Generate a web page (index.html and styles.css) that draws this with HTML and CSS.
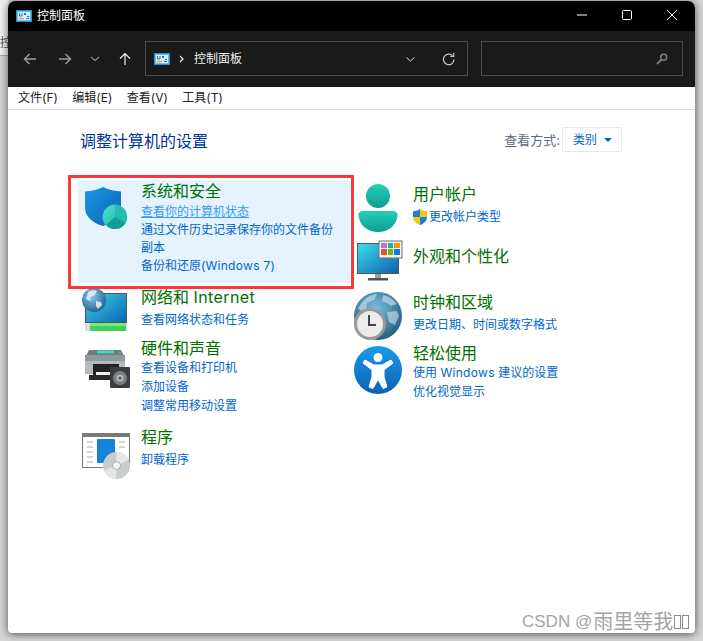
FILE: index.html
```html
<!DOCTYPE html>
<html lang="zh-CN">
<head>
<meta charset="utf-8">
<title>控制面板</title>
<link rel="stylesheet" href="styles.css">
</head>
<body>
<div class="behind"><span class="behind-text">控</span></div>
<div class="window">
  <header class="titlebar">
    <svg class="app-icon" viewBox="0 0 16 12"><rect x=".5" y=".5" width="15" height="11" fill="#5cc3ee" stroke="#2a8fd4"/><rect x="2" y="2" width="12" height="8" fill="#d8f1fb"/><path d="M3.500 3v3h2.500V3" fill="none" stroke="#2a6fb8"/><path d="M8 3h2v2H8z" fill="#2a6fb8"/><path d="M3 8.500h5" stroke="#f09a2a" stroke-width="1.500"/><path d="M10 8.500h3M11 6.500h2" stroke="#2a6fb8"/></svg>
    <span class="title-text">控制面板</span>
    <div class="caption">
      <svg class="cap" viewBox="0 0 10 20"><path d="M0 10h10" stroke="#fff" fill="none"/></svg>
      <svg class="cap" viewBox="0 0 10 20"><rect x=".5" y="5.500" width="9" height="9" rx="1" stroke="#fff" fill="none"/></svg>
      <svg class="cap" viewBox="0 0 10 20"><path d="M0 5l10 10M10 5L0 15" stroke="#fff" fill="none"/></svg>
    </div>
  </header>
  <div class="toolbar">
    <svg class="nav nav-back" viewBox="0 0 14 14"><path d="M13 7H1.500M6.500 2l-5 5 5 5" stroke="#9a9a9a" stroke-width="1.500" fill="none"/></svg>
    <svg class="nav nav-fwd" viewBox="0 0 14 14"><path d="M1 7h11.500M7.500 2l5 5-5 5" stroke="#9a9a9a" stroke-width="1.500" fill="none"/></svg>
    <svg class="nav nav-down" viewBox="0 0 10 6"><path d="M1 1l4 3.500L9 1" stroke="#8a8a8a" stroke-width="1.300" fill="none"/></svg>
    <svg class="nav nav-up" viewBox="0 0 14 14"><path d="M7 13V1.500M2 6.500l5-5 5 5" stroke="#f2f2f2" stroke-width="1.200" fill="none"/></svg>
    <div class="address">
      <svg class="app-icon" viewBox="0 0 16 12"><rect x=".5" y=".5" width="15" height="11" fill="#5cc3ee" stroke="#2a8fd4"/><rect x="2" y="2" width="12" height="8" fill="#d8f1fb"/><path d="M3.500 3v3h2.500V3" fill="none" stroke="#2a6fb8"/><path d="M8 3h2v2H8z" fill="#2a6fb8"/><path d="M3 8.500h5" stroke="#f09a2a" stroke-width="1.500"/><path d="M10 8.500h3M11 6.500h2" stroke="#2a6fb8"/></svg>
      <svg class="crumb-sep" viewBox="0 0 5 8"><path d="M1 1l3 3-3 3" stroke="#eee" stroke-width="1.200" fill="none"/></svg>
      <span class="crumb">控制面板</span>
      <svg class="addr-down" viewBox="0 0 9 5"><path d="M.5.500l4 3.500 4-3.500" stroke="#ddd" fill="none"/></svg>
      <svg class="refresh" viewBox="0 0 13 13"><path d="M10.500 2.700A5.300 5.300 0 1 0 12 6.500" stroke="#c8c8c8" stroke-width="1.200" fill="none"/><path d="M8.300 3.300h3.400V0" stroke="#c8c8c8" stroke-width="1.200" fill="none"/></svg>
    </div>
    <div class="search">
      <svg class="search-icon" viewBox="0 0 12 12"><circle cx="7.700" cy="4.300" r="3" stroke="#7d7d7d" stroke-width="1.500" fill="none"/><path d="M5.500 6.500L1 11" stroke="#7d7d7d" stroke-width="2"/></svg>
    </div>
  </div>
  <nav class="menubar">
    <span class="menu-item">文件(F)</span>
    <span class="menu-item">编辑(E)</span>
    <span class="menu-item">查看(V)</span>
    <span class="menu-item">工具(T)</span>
  </nav>
  <main class="content">
    <div class="content-head">
      <h1 class="heading">调整计算机的设置</h1>
      <div class="viewby">
        <span class="viewby-label">查看方式:</span>
        <div class="viewby-btn">类别<span class="caret"></span></div>
      </div>
    </div>
    <div class="columns">
      <div class="col col-left">
        <section class="item item-hover">
          <svg class="icon" viewBox="0 0 63 50">
            <defs>
              <linearGradient id="sh" x1="0" y1="0" x2="1" y2="1"><stop offset="0" stop-color="#1a98e6"/><stop offset="1" stop-color="#0a62b0"/></linearGradient>
              <linearGradient id="tl" x1="0" y1="0" x2="1" y2="1"><stop offset="0" stop-color="#46e8d8"/><stop offset="1" stop-color="#14a898"/></linearGradient>
            </defs>
            <path d="M7 11.500C13 11 19 10 25 7c6 3 12 4 18 4.500V28c0 9-8 15-18 18C15 43 7 37 7 28z" fill="url(#sh)"/>
            <circle cx="37" cy="37" r="12.500" fill="#fff" fill-opacity=".35"/>
            <circle cx="37" cy="37" r="12" fill="url(#tl)"/>
            <path d="M37 25a12 12 0 0 1 10.500 18L37 37z" fill="#22bfae"/>
            <path d="M47.500 43A12 12 0 0 1 28 45l9-8z" fill="#159c94"/>
          </svg>
          <div class="item-body">
            <h2 class="item-title">系统和安全</h2>
            <a class="link link-active">查看你的计算机状态</a>
            <a class="link">通过文件历史记录保存你的文件备份副本</a>
            <a class="link">备份和还原(<span class="latin">Windows 7</span>)</a>
          </div>
        </section>
        <section class="item item-net">
          <svg class="icon" viewBox="0 0 63 50">
            <defs>
              <linearGradient id="scr" x1="0" y1="0" x2="1" y2="1"><stop offset="0" stop-color="#3fd0e8"/><stop offset="1" stop-color="#0a66b4"/></linearGradient>
              <radialGradient id="glb" cx=".4" cy=".35" r=".7"><stop offset="0" stop-color="#8ac8ee"/><stop offset="1" stop-color="#1c5f92"/></radialGradient>
            </defs>
            <rect x="7.500" y="7.500" width="41" height="29" fill="url(#scr)" stroke="#555"/>
            <rect x="7" y="37" width="42" height="8" rx="1" fill="#ddd"/>
            <rect x="12" y="37" width="36" height="8" rx="1" fill="#3fcf5a"/>
            <rect x="12" y="37" width="36" height="3" fill="#72ea7e"/>
            <circle cx="16" cy="14" r="12" fill="url(#glb)"/>
            <path d="M10 6c3-2 7-2 9-1l-2 4-5 2 1 4-5-2zM18 15l5 1 1 3-4 4-2-3z" fill="#e8f2f8" fill-opacity=".85"/>
          </svg>
          <div class="item-body">
            <h2 class="item-title">网络和 <span class="latin">Internet</span></h2>
            <a class="link">查看网络状态和任务</a>
          </div>
        </section>
        <section class="item item-hw">
          <svg class="icon icon-tall" viewBox="0 0 63 50">
            <path d="M11 2h32l3 6H8z" fill="#6f7a7d"/>
            <rect x="19" y="2.500" width="17" height="3" fill="#45d6c0"/>
            <rect x="7" y="7" width="40" height="19" rx="1" fill="#b3babd"/>
            <rect x="7" y="7" width="40" height="6" fill="#8f989b"/>
            <circle cx="42" cy="5" r="1" fill="#4fe06a"/>
            <rect x="15" y="16" width="26" height="13" fill="#222"/>
            <rect x="18" y="24" width="22" height="6" fill="#f1f1f1"/>
            <rect x="11" y="27" width="30" height="5" fill="#2b2b2b"/>
            <rect x="32" y="19" width="20" height="21" rx="1" fill="#3a3d40"/>
            <circle cx="42" cy="30" r="7" fill="#7b7f83"/>
            <circle cx="42" cy="30" r="3.500" fill="#b4b6b8"/>
            <circle cx="42" cy="30" r="1.500" fill="#55585b"/>
          </svg>
          <div class="item-body">
            <h2 class="item-title">硬件和声音</h2>
            <a class="link">查看设备和打印机</a>
            <a class="link">添加设备</a>
            <a class="link">调整常用移动设置</a>
          </div>
        </section>
        <section class="item item-prog">
          <svg class="icon" viewBox="0 0 63 50">
            <rect x="4.500" y="5.500" width="47" height="34" fill="#fff" stroke="#7a7a7a"/>
            <rect x="4" y="5" width="48" height="4" fill="#7a7a7a"/>
            <path d="M9 14h6M9 19h6M9 24h6M9 29h6M9 34h6M41 14h6M41 19h6" stroke="#aaa"/>
            <rect x="19" y="11" width="18" height="24" rx="1" fill="#1682d8"/>
            <circle cx="38.500" cy="37.500" r="13.500" fill="#c9cccd"/>
            <path d="M38.500 24a13.500 13.500 0 0 1 12 8l-12 5.500z" fill="#e6e8e8"/>
            <path d="M26 42a13.500 13.500 0 0 0 12 9l.5-13.500z" fill="#e3e5e5"/>
            <circle cx="38.500" cy="37.500" r="4" fill="#f4f4f4" stroke="#aaa"/>
          </svg>
          <div class="item-body">
            <h2 class="item-title">程序</h2>
            <a class="link">卸载程序</a>
          </div>
        </section>
      </div>
      <div class="col col-right">
        <section class="item item-user">
          <svg class="icon" viewBox="0 0 60 50">
            <defs>
              <linearGradient id="usr" x1="0" y1="0" x2="0" y2="1"><stop offset="0" stop-color="#24d0b8"/><stop offset="1" stop-color="#0f9c92"/></linearGradient>
            </defs>
            <circle cx="25" cy="13" r="12" fill="url(#usr)"/>
            <path d="M10 28h30c3 0 5 2 4.500 5C43 43 35 49 25 49S7 43 5.500 33C5 30 7 28 10 28z" fill="url(#usr)"/>
          </svg>
          <div class="item-body">
            <h2 class="item-title">用户帐户</h2>
            <a class="link link-uac"><svg class="uac" viewBox="0 0 14 16"><path d="M7 0c2 1.500 4 2 7 2.500V8c0 4-3 6.500-7 8-4-1.500-7-4-7-8V2.500C3 2 5 1.500 7 0z" fill="#f5c518"/><path d="M7 0v8H0V2.500C3 2 5 1.500 7 0z" fill="#1c7fd6"/><path d="M7 8h7c0 4-3 6.500-7 8z" fill="#1c7fd6"/></svg>更改帐户类型</a>
          </div>
        </section>
        <section class="item item-look">
          <svg class="icon icon-look" viewBox="0 0 60 50">
            <defs>
              <linearGradient id="scr2" x1="0" y1="0" x2="1" y2="1"><stop offset="0" stop-color="#3fdcea"/><stop offset="1" stop-color="#0a62ae"/></linearGradient>
            </defs>
            <rect x="4.500" y="2.500" width="41" height="30" fill="url(#scr2)" stroke="#555"/>
            <rect x="22" y="33" width="6" height="5" fill="#9aa0a4"/>
            <rect x="15" y="37" width="20" height="2.500" fill="#4f5458"/>
            <rect x="26" y="0" width="23" height="17" fill="#f4f4f4" stroke="#6f6f6f" stroke-width="1"/>
            <rect x="28" y="2" width="6" height="5" fill="#a77bd8"/><rect x="35" y="2" width="5" height="5" fill="#19b29a"/><rect x="41" y="2" width="6" height="5" fill="#f2950f"/>
            <rect x="28" y="8" width="6" height="6" fill="#e8541a"/><rect x="35" y="8" width="5" height="6" fill="#6cb51f"/><rect x="41" y="8" width="6" height="6" fill="#0f78d8"/>
          </svg>
          <div class="item-body">
            <h2 class="item-title">外观和个性化</h2>
          </div>
        </section>
        <section class="item item-time">
          <svg class="icon" viewBox="0 0 60 50">
            <defs>
              <radialGradient id="gl2" cx=".45" cy=".35" r=".75"><stop offset="0" stop-color="#7cc0e0"/><stop offset="1" stop-color="#174f72"/></radialGradient>
            </defs>
            <circle cx="25" cy="25" r="24" fill="url(#gl2)"/>
            <path d="M10 10c4-4 9-7 14-7l-3 6-7 3-1 7-5 1-3-3zM30 4c6 1 10 4 14 9l-6 2-4-3-5-2zM34 21l10-1 2 5-4 9-6-3z" fill="#cfe5f0" fill-opacity=".6"/>
            <circle cx="17" cy="33" r="14.500" fill="#ececec" stroke="#9a9a9a" stroke-width="3"/>
            <path d="M16 24v10h7" stroke="#444" stroke-width="2" fill="none"/>
          </svg>
          <div class="item-body">
            <h2 class="item-title">时钟和区域</h2>
            <a class="link">更改日期、时间或数字格式</a>
          </div>
        </section>
        <section class="item item-ease">
          <svg class="icon icon-ease" viewBox="0 0 60 50">
            <defs>
              <linearGradient id="eas" x1="0" y1="0" x2="0" y2="1"><stop offset="0" stop-color="#1a9ae8"/><stop offset="1" stop-color="#0a62b4"/></linearGradient>
            </defs>
            <circle cx="25" cy="24" r="24" fill="url(#eas)"/>
            <circle cx="25" cy="11.500" r="4.500" fill="#fff"/>
            <path d="M12 14l9 5h8l9-5 2 3-9 7v7l3 10-4 1.500-5-9-5 9-4-1.500 3-10v-7l-9-7z" fill="#fff" stroke="#fff" stroke-linejoin="round"/>
          </svg>
          <div class="item-body">
            <h2 class="item-title">轻松使用</h2>
            <a class="link">使用 <span class="latin">Windows</span> 建议的设置</a>
            <a class="link">优化视觉显示</a>
          </div>
        </section>
      </div>
    </div>
  </main>
</div>
<div class="annot"></div>
<div class="watermark">CSDN @<span class="wm-cjk">雨里等我</span><span class="tofu"></span><span class="tofu"></span></div>
</body>
</html>
```
FILE: styles.css
```css
* { box-sizing: border-box; }
html, body { margin: 0; height: 100%; }
body {
  width: 703px;
  height: 641px;
  overflow: hidden;
  position: relative;
  padding: 1px 8px 8px;
  background: #d6d6d6;
  font-family: Inter, "Noto Sans CJK SC", sans-serif;
  font-size: 12px;
}
.behind { position: absolute; left: 0; top: 0; width: 8px; height: 56px; border-bottom: 1px solid #aaa; background: #f1f1f1; overflow: hidden; }
.behind-text { position: absolute; left: 0; top: 33px; color: #555; font-size: 12px; }
.window {
  position: relative;
  width: 687px;
  height: 632px;
  background: #fff;
  border-radius: 7px 7px 4px 4px;
  overflow: hidden;
  display: flex;
  flex-direction: column;
  box-shadow: 0 1px 9px rgba(0, 0, 0, .65);
}
.titlebar { height: 30px; flex: none; background: #000; color: #fff; display: flex; align-items: center; padding-left: 8px; }
.app-icon { width: 16px; height: 12px; flex: none; }
.title-text { margin-left: 5px; font-size: 12px; line-height: 30px; }
.caption { margin-left: auto; display: flex; gap: 35px; height: 20px; padding-right: 18px; margin-bottom: 2px; }
.cap { width: 10px; height: 20px; display: block; overflow: visible; }
.toolbar { height: 56px; flex: none; background: #1a1a1a; display: flex; align-items: center; position: relative; padding: 0 0 1px 15px; }
.nav { flex: none; display: block; }
.nav-back, .nav-fwd { width: 14px; height: 14px; }
.nav-fwd { margin-left: 21px; }
.nav-down { width: 10px; height: 6px; margin-left: 18px; }
.nav-up { width: 14px; height: 14px; margin-left: 18px; }
.address {
  margin-left: 13px;
  width: 323px;
  height: 35px;
  border: 1px solid #4c4c4c;
  display: flex;
  align-items: center;
  padding-left: 8px;
}
.crumb-sep { width: 5px; height: 8px; margin-left: 9px; }
.crumb { margin-left: 10px; margin-bottom: 2px; color: #eee; font-size: 12px; }
.addr-down { width: 9px; height: 5px; margin-left: auto; margin-top: 2px; }
.refresh { width: 13px; height: 13px; margin-left: 27px; margin-right: 12px; margin-top: 2px; }
.search {
  margin-left: 13px;
  width: 202px;
  height: 35px;
  border: 1px solid #4c4c4c;
  display: flex;
  align-items: center;
  justify-content: flex-end;
  padding-right: 14px;
}
.search-icon { width: 12px; height: 12px; }
.menubar { height: 23px; flex: none; display: flex; padding-left: 10px; border-bottom: 1px solid #dcdcdc; align-items: center; color: #222; }
.menu-item { font-size: 12px; line-height: 22px; margin-right: 14.500px; white-space: nowrap; }
.content { flex: 1; padding: 0; position: relative; }
.content-head { display: flex; justify-content: space-between; height: 70px; padding: 17px 73px 0 72px; }
.heading { margin: 0; font-size: 16px; font-weight: 400; color: #003399; line-height: 28px; }
.viewby { display: flex; align-items: flex-start; }
.viewby-label { font-size: 13px; color: #5b6b7d; line-height: 26px; }
.viewby-btn {
  margin-left: 2px;
  width: 60px;
  height: 25px;
  border: 1px solid #e3e8ef;
  border-radius: 2px;
  color: #0066cc;
  font-size: 12px;
  line-height: 23px;
  padding-left: 10px;
  display: flex;
  align-items: center;
}
.caret { width: 0; height: 0; margin-left: 7px; border-left: 4px solid transparent; border-right: 4px solid transparent; border-top: 4px solid #0066cc; }
.columns { display: flex; padding-left: 70px; }
.col { display: flex; flex-direction: column; }
.col-left { width: 275px; }
.col-right { width: 260px; }
.item { display: flex; position: relative; }
.icon { width: 63px; height: 50px; flex: none; display: block; overflow: visible; }
.col-right .icon { width: 60px; }
.item-body { flex: 1; min-width: 0; }
.item-title { margin: 0; font-size: 16px; font-weight: 400; line-height: 22px; color: #007000; white-space: nowrap; }
.latin { letter-spacing: .025em; }
.link { display: block; color: #0066cc; font-size: 12px; line-height: 18px; }
.link-active { color: #3399ff; text-decoration: underline; margin-top: 1px; }
.link-uac { display: flex; align-items: center; }
.uac { width: 14px; height: 16px; margin-right: 2px; flex: none; }

.item-hover { width: 272px; height: 103px; background: #e5f3ff; border-radius: 2px; padding-right: 8px; }
.item-net { margin-top: 3px; height: 50px; }
.item-net .link, .item-time .link, .item-prog .link, .item-user .link { margin-top: 3px; }
.item-hw { height: 90px; padding-top: 1px; }
.item-hw .link, .item-ease .link { line-height: 19px; }
.item-hw .link:first-of-type { margin-top: -1px; }
.item-ease .link:first-of-type { margin-top: -1px; }
.icon-tall { margin-top: 11px; }
.item-prog { height: 50px; }
.item-prog .icon { margin-top: 2px; }
.item-user { margin-top: 3px; height: 50px; }
.item-look { margin-top: 12px; height: 50px; }
.icon-look { margin-top: -4px; }
.item-time { margin-top: -4px; height: 50px; }
.item-ease { margin-top: 1px; height: 70px; }
.icon-ease { margin-top: 4px; }

.annot { position: absolute; left: 68px; top: 175px; width: 286px; height: 114px; border: 3px solid #f63a3a; }
.watermark { position: absolute; left: 522px; top: 609px; font-family: "Liberation Sans", "Noto Sans CJK SC", sans-serif; font-size: 17px; line-height: 26px; color: #a4a4a4; white-space: nowrap; display: flex; align-items: center; }
.wm-cjk { font-size: 20px; margin-left: 1px; }
.tofu { display: block; width: 7px; height: 14px; margin-left: 1px; border: 1px solid #8a8a8a; }
```
